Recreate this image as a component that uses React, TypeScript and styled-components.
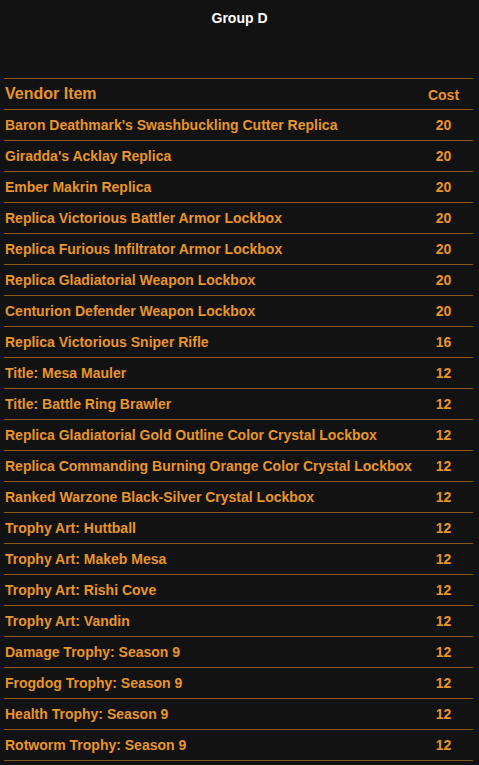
import styled, { createGlobalStyle } from "styled-components";

const ITEMS: [string, number][] = [
  ["Baron Deathmark's Swashbuckling Cutter Replica", 20],
  ["Giradda's Acklay Replica", 20],
  ["Ember Makrin Replica", 20],
  ["Replica Victorious Battler Armor Lockbox", 20],
  ["Replica Furious Infiltrator Armor Lockbox", 20],
  ["Replica Gladiatorial Weapon Lockbox", 20],
  ["Centurion Defender Weapon Lockbox", 20],
  ["Replica Victorious Sniper Rifle", 16],
  ["Title: Mesa Mauler", 12],
  ["Title: Battle Ring Brawler", 12],
  ["Replica Gladiatorial Gold Outline Color Crystal Lockbox", 12],
  ["Replica Commanding Burning Orange Color Crystal Lockbox", 12],
  ["Ranked Warzone Black-Silver Crystal Lockbox", 12],
  ["Trophy Art: Huttball", 12],
  ["Trophy Art: Makeb Mesa", 12],
  ["Trophy Art: Rishi Cove", 12],
  ["Trophy Art: Vandin", 12],
  ["Damage Trophy: Season 9", 12],
  ["Frogdog Trophy: Season 9", 12],
  ["Health Trophy: Season 9", 12],
  ["Rotworm Trophy: Season 9", 12],
];

const App = () => {
  return (
    <>
      <GlobalStyle />
      <Page>
        <Title>Group D</Title>
        <Table>
          <thead>
            <tr>
              <HeadCell>Vendor Item</HeadCell>
              <HeadCell $cost>Cost</HeadCell>
            </tr>
          </thead>
          <tbody>
            {ITEMS.map(([name, cost]) => (
              <tr key={name}>
                <Cell>{name}</Cell>
                <Cell $cost>{cost}</Cell>
              </tr>
            ))}
          </tbody>
        </Table>
      </Page>
    </>
  );
};

const GlobalStyle = createGlobalStyle`
  html, body {
    margin: 0;
    background: #121212;
  }
  body {
    font-family: "Liberation Sans", Arial, sans-serif;
  }
`;

const Page = styled.div`
  display: flex;
  flex-direction: column;
  align-items: flex-start;
  padding: 11px 6px 0 4px;
  min-height: 765px;
  box-sizing: border-box;
`;

const Title = styled.h4`
  align-self: stretch;
  margin: 0 0 52px;
  text-align: center;
  color: #ffffff;
  font-size: 14px;
  font-weight: bold;
  line-height: 15px;
  padding-left: 2px;
`;

const Table = styled.table`
  width: 100%;
  border-collapse: collapse;
  border-top: 1px solid #8a5a1c;
`;

const HeadCell = styled.th<{ $cost?: boolean }>`
  height: 31px;
  box-sizing: border-box;
  padding: ${(p) => (p.$cost ? "2px 0 0 1px" : "0 0 0 1px")};
  border-bottom: 1px solid #8a5a1c;
  color: #e8952a;
  font-weight: bold;
  font-size: ${(p) => (p.$cost ? "14px" : "16px")};
  line-height: 18px;
  text-align: ${(p) => (p.$cost ? "center" : "left")};
  width: ${(p) => (p.$cost ? "60px" : "auto")};
  vertical-align: middle;
`;

const Cell = styled.td<{ $cost?: boolean }>`
  height: 31px;
  box-sizing: border-box;
  padding: 0 0 0 1px;
  border-bottom: 1px solid #8a5a1c;
  color: #e8952a;
  font-weight: bold;
  font-size: 14px;
  line-height: 16px;
  text-align: ${(p) => (p.$cost ? "center" : "left")};
  vertical-align: middle;
`;

export default App;
